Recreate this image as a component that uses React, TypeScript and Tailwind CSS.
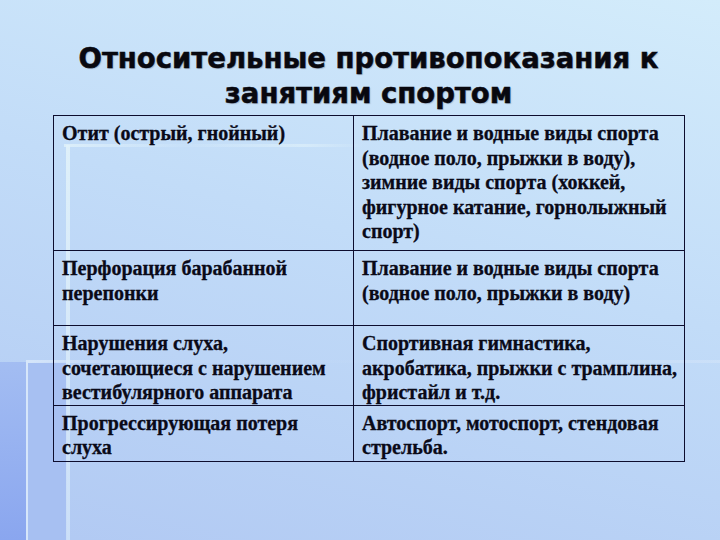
import React from "react";

const rows = [
  {
    left: "Отит (острый, гнойный)",
    right:
      "Плавание и водные виды спорта (водное поло, прыжки в воду), зимние виды спорта (хоккей, фигурное катание, горнолыжный спорт)",
    h: "h-[135px]",
  },
  {
    left: "Перфорация барабанной перепонки",
    right: "Плавание и водные виды спорта (водное поло, прыжки в воду)",
    h: "h-[75px]",
  },
  {
    left: "Нарушения слуха, сочетающиеся с нарушением вестибулярного аппарата",
    right: "Спортивная гимнастика, акробатика, прыжки с трамплина, фристайл и т.д.",
    h: "h-[79px]",
  },
  {
    left: "Прогрессирующая потеря слуха",
    right: "Автоспорт, мотоспорт, стендовая стрельба.",
    h: "h-[56px]",
  },
];

export default function App() {
  return (
    <div className="relative w-[720px] h-[540px] overflow-hidden bg-[linear-gradient(195deg,#d3ecfb_0%,#c2dcf8_45%,#b1c9f3_100%)]">
      {/* декоративные полосы шаблона */}
      <div className="absolute left-0 top-[362px] w-[26px] h-[178px] bg-[linear-gradient(to_bottom,#a3bdf2,#8aa6ef)]" />
      <div className="absolute left-[28px] top-[362px] w-[39px] h-[178px] bg-[#a7c0f2]" />
      <div className="absolute left-[26px] top-[362px] w-[2px] h-[178px] bg-[#d6e6fa]" />
      <div className="absolute left-[26px] top-[360px] w-[694px] h-[3px] bg-[linear-gradient(to_right,#d6e6fa,rgba(214,230,250,0.15)_15%,rgba(214,230,250,0)_70%,rgba(214,230,250,0.5))]" />
      <div className="absolute left-[66px] top-[145px] w-[4px] h-[395px] bg-[linear-gradient(to_bottom,rgba(225,242,250,0.9),rgba(214,232,250,0.7))]" />
      <div className="absolute left-[64px] top-[144px] w-[300px] h-[3px] bg-[linear-gradient(to_right,rgba(225,242,250,0.8),rgba(225,242,250,0.1)_40%,rgba(225,242,250,0.6)_80%,rgba(225,242,250,0))]" />

      <div className="relative flex flex-col">
        <h1
          className="pt-[41px] pl-[53px] w-[684px] text-center text-[27.5px] leading-[35px] font-bold text-[#08080f] [-webkit-text-stroke:0.5px_#08080f] [text-shadow:1px_1px_1px_rgba(120,130,150,0.5)]"
          style={{ fontFamily: '"DejaVu Sans", Verdana, sans-serif' }}
        >
          Относительные противопоказания к
          <br />
          занятиям спортом
        </h1>

        <div className="pl-[53px] pt-[4px]">
          <table
            className="w-[632px] border-collapse text-[20px] leading-[24.5px] font-bold text-[#0a0a18] [-webkit-text-stroke:0.3px_#0a0a18]"
            style={{ fontFamily: '"Liberation Serif", "Times New Roman", serif' }}
          >
            <tbody>
              {rows.map((r) => (
                <tr key={r.left} className={r.h}>
                  <td className="w-[300px] align-top border-[1.5px] border-[#0d0d2e] pl-[8px] pr-[6px] pt-[5px]">
                    {r.left}
                  </td>
                  <td className="align-top border-[1.5px] border-[#0d0d2e] pl-[8px] pr-[6px] pt-[5px]">
                    {r.right}
                  </td>
                </tr>
              ))}
            </tbody>
          </table>
        </div>
      </div>
    </div>
  );
}
